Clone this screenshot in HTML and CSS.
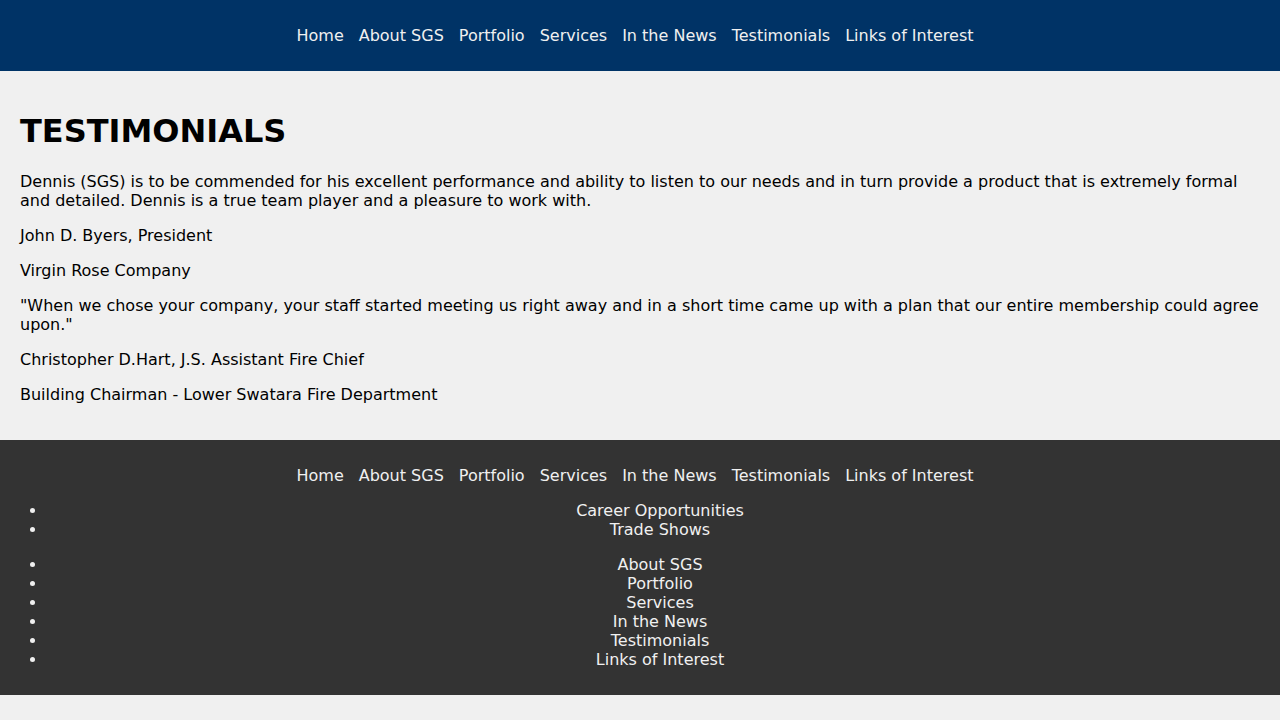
FILE: index.html
```html
<!DOCTYPE html>
<html lang="en">
<head>
<meta charset="utf-8">
<title>Testimonials</title>
<link rel="stylesheet" href="styles.css">
</head>
<body>
<header class="site-header">
  <nav>
    <ul class="nav-list">
      <li><a href="#">Home</a></li>
      <li><a href="#">About SGS</a></li>
      <li><a href="#">Portfolio</a></li>
      <li><a href="#">Services</a></li>
      <li><a href="#">In the News</a></li>
      <li><a href="#">Testimonials</a></li>
      <li><a href="#">Links of Interest</a></li>
    </ul>
  </nav>
</header>
<main class="content">
  <h1>TESTIMONIALS</h1>
  <p>Dennis (SGS) is to be commended for his excellent performance and ability to listen to our needs and in turn provide a product that is extremely formal and detailed. Dennis is a true team player and a pleasure to work with.</p>
  <p>John D. Byers, President</p>
  <p>Virgin Rose Company</p>
  <p>"When we chose your company, your staff started meeting us right away and in a short time came up with a plan that our entire membership could agree upon."</p>
  <p>Christopher D.Hart, J.S. Assistant Fire Chief</p>
  <p>Building Chairman - Lower Swatara Fire Department</p>
</main>
<footer class="site-footer">
  <nav>
    <ul class="nav-list">
      <li><a href="#">Home</a></li>
      <li><a href="#">About SGS</a></li>
      <li><a href="#">Portfolio</a></li>
      <li><a href="#">Services</a></li>
      <li><a href="#">In the News</a></li>
      <li><a href="#">Testimonials</a></li>
      <li><a href="#">Links of Interest</a></li>
    </ul>
  </nav>
  <ul class="footer-list">
    <li><a href="#">Career Opportunities</a></li>
    <li><a href="#">Trade Shows</a></li>
  </ul>
  <ul class="footer-list">
    <li><a href="#">About SGS</a></li>
    <li><a href="#">Portfolio</a></li>
    <li><a href="#">Services</a></li>
    <li><a href="#">In the News</a></li>
    <li><a href="#">Testimonials</a></li>
    <li><a href="#">Links of Interest</a></li>
  </ul>
</footer>
</body>
</html>
```
FILE: styles.css
```css
html, body {
  margin: 0;
  padding: 0;
}
body {
  background: #f0f0f0;
  color: #000;
  font-family: "DejaVu Sans", sans-serif;
  font-size: 16px;
}
a {
  color: #f0f0f0;
  text-decoration: none;
}
.site-header {
  background: #003366;
  padding: 10px 0;
}
.nav-list {
  list-style: none;
  margin: 16px 0;
  padding: 0 10px 0 0;
  display: flex;
  justify-content: center;
  gap: 15px;
}
.content {
  padding: 20px;
}
.content h1 {
  font-size: 32px;
  margin: 21.44px 0;
}
.content p {
  margin: 16px 0;
}
.site-footer {
  background: #333333;
  color: #f0f0f0;
  padding: 10px 0;
}
.footer-list {
  margin: 16px 0;
  padding: 0 7px 0 47px;
  text-align: center;
}
```
